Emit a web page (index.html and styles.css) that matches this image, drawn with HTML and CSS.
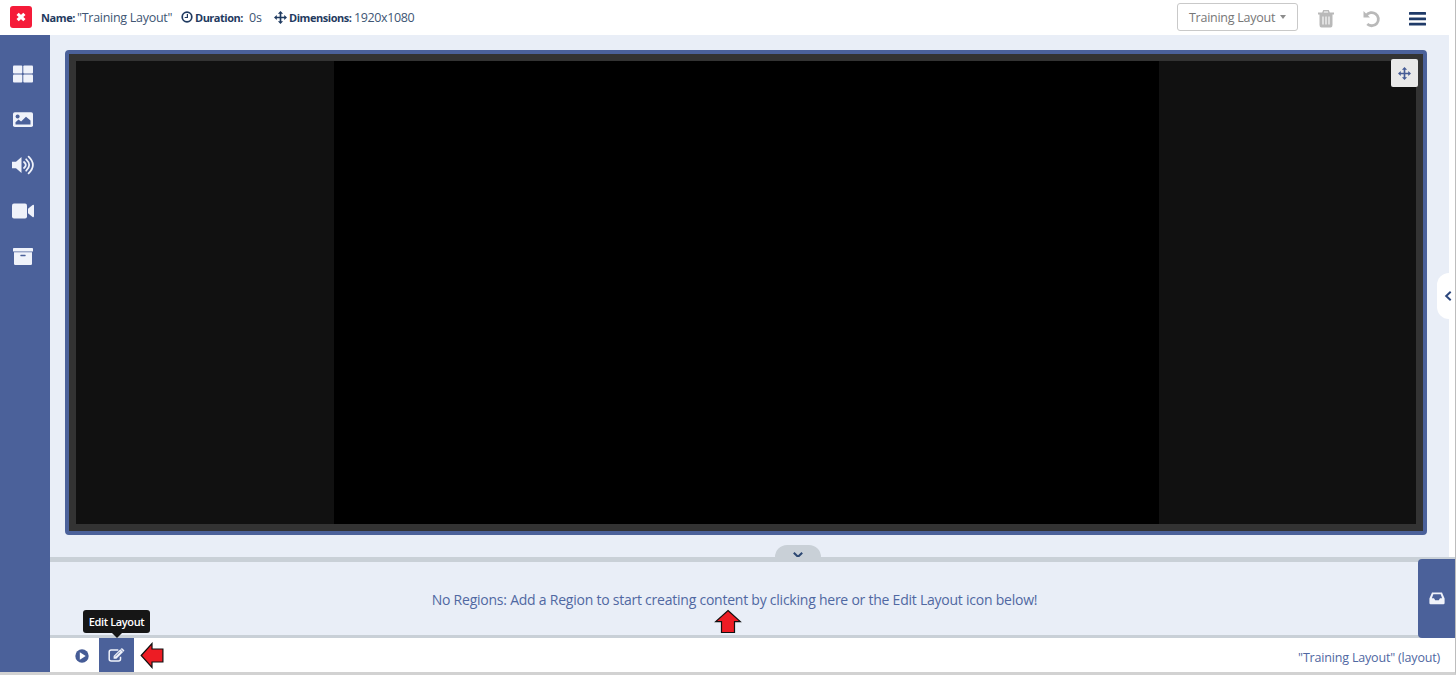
FILE: index.html
```html
<!DOCTYPE html>
<html lang="en">
<head>
<meta charset="utf-8">
<title>Layout Editor</title>
<link rel="stylesheet" href="styles.css">
</head>
<body>
<div class="editor">
  <header class="topbar">
    <button class="close" aria-label="Close"><svg width="12" height="12" viewBox="0 0 12 12"><path d="M2.6 2.8 9.4 9.2M9.4 2.8 2.6 9.2" stroke="#fff" stroke-width="3.2"/></svg></button>
    <div class="info">
      <b class="label name-label">Name:</b><span class="value name-value">"Training Layout"</span>
      <svg class="clock" width="12" height="12" viewBox="0 0 12 12"><circle cx="6" cy="6" r="4.8" fill="none" stroke="#1f3a60" stroke-width="1.7"/><path d="M6.4 3v3.5H3.7" fill="none" stroke="#1f3a60" stroke-width="1.2"/></svg>
      <b class="label duration-label">Duration:</b><span class="value duration-value">0s</span>
      <svg class="dims" width="13" height="13" viewBox="0 0 14 14" fill="#1f3a60"><path d="M7 0 9.8 3H7.9v3.1H11V4.2L14 7l-3 2.8V7.9H7.9V11h1.9L7 14l-2.8-3h1.9V7.9H3v1.9L0 7l3-2.8v1.9h3.1V3H4.2z"/></svg>
      <b class="label dims-label">Dimensions:</b><span class="value dims-value">1920x1080</span>
    </div>
    <div class="actions">
      <button class="select"><span>Training Layout</span><i class="caret"></i></button>
      <svg class="trash" width="16" height="18" viewBox="0 0 16 18"><path fill="#b9b9b9" d="M5.2 0h5.6l1 2.6H16v1.8h-1.5V15q0 2.500-2 2.500h-9q-2 0-2-2.500V4.400H0V2.600h4.200zM6.100 1.500l-.4 1.100h4.600l-.4-1.100z"/><path d="M5 6.500v8M8 6.500v8M11 6.500v8" stroke="#fff" stroke-width="1.100"/></svg>
      <svg class="undo" width="18" height="18" viewBox="0 0 18 18"><path d="M3.200 5.600A6.600 6.600 0 1 1 4.300 14" fill="none" stroke="#b9b9b9" stroke-width="2.800"/><path d="M.5 1v6.500H7z" fill="#b9b9b9"/></svg>
      <svg class="menu" width="17" height="14" viewBox="0 0 17 14" fill="#1f3a68"><rect width="17" height="2.800" rx=".5"/><rect y="5.400" width="17" height="2.800" rx=".5"/><rect y="10.800" width="17" height="2.800" rx=".5"/></svg>
    </div>
  </header>

  <nav class="sidebar">
    <svg width="22" height="20" viewBox="0 0 22 20" fill="#eff2fa"><rect x="1" y="1.500" width="9.300" height="8" rx="1"/><rect x="11.300" y="1.500" width="9.700" height="8" rx="1"/><rect x="1" y="10.500" width="9.300" height="8" rx="1"/><rect x="11.300" y="10.500" width="9.700" height="8" rx="1"/></svg>
    <svg width="22" height="20" viewBox="0 0 22 20"><rect x="1" y="2.300" width="20" height="14.700" rx="1.800" fill="#eff2fa"/><circle cx="5.600" cy="6.500" r="2" fill="#4b619a"/><path d="M3.500 14.600v-2.400l3-2.800 2.600 2L14 6.800l4.500 3.800v4z" fill="#4b619a"/></svg>
    <svg width="24" height="20" viewBox="0 0 24 20"><path d="M1 6.800h4L10.500 2v16L5 13.200H1z" fill="#eff2fa"/><path d="M13 7q3.600 3 0 6M15.200 4.300q6 5.700 0 11.400M17.600 1.700q8.600 8.300 0 16.600" fill="none" stroke="#eff2fa" stroke-width="1.800" stroke-linecap="round"/></svg>
    <svg width="24" height="20" viewBox="0 0 24 20" fill="#eff2fa"><rect x="1" y="2.500" width="15" height="15" rx="2"/><path d="M17 7.700l4.600-3.600q1.400-.8 1.400.8v10.200q0 1.600-1.400.8L17 12.300z"/></svg>
    <svg width="22" height="20" viewBox="0 0 22 20"><rect x="1" y="1" width="20" height="3.600" rx=".7" fill="#eff2fa"/><path d="M2 5.300h18v11.500q0 1.200-1.200 1.200H3.200Q2 18 2 16.800z" fill="#eff2fa"/><rect x="8.300" y="7.800" width="5.400" height="1.400" rx=".6" fill="#4b619a"/></svg>
  </nav>

  <main class="stage">
    <div class="viewer"><div class="backdrop"><div class="canvas"></div></div>
      <button class="move" aria-label="Move"><svg width="13" height="13" viewBox="0 0 14 14" fill="#465c96"><path d="M7 0 9.800 3H7.900v3.100H11V4.200L14 7l-3 2.800V7.900H7.900V11h1.900L7 14l-2.800-3h1.900V7.900H3v1.900L0 7l3-2.800v1.900h3.100V3H4.200z"/></svg></button>
    </div>
    <div class="side-handle"><svg width="8" height="12" viewBox="0 0 8 12"><path d="M6.700 1.800 2.200 6l4.500 4.200" fill="none" stroke="#2b467d" stroke-width="2"/></svg></div>
    <div class="collapse"><svg width="12" height="8" viewBox="0 0 12 8"><path d="M1.800 1.700 6 5.800l4.200-4.100" fill="none" stroke="#2d4873" stroke-width="2"/></svg></div>
  </main>

  <section class="timeline">
    <p class="message">No Regions: Add a Region to start creating content by clicking here or the Edit Layout icon below!</p>
    <svg class="arrow-up" width="28" height="25" viewBox="0 0 28 25"><path d="M14 1.500 26.300 12.600H20.500V23.500H7.500V12.600H1.700z" fill="#ed1c24" stroke="#111" stroke-width="1.200"/></svg>
    <div class="drawer"><svg width="16" height="13" viewBox="0 0 16 13"><path fill="#eff2fa" fill-rule="evenodd" d="M3 .5h10l2.600 6V11q0 1.300-1.200 1.300H1.600Q.4 12.300.4 11V6.500zM4.300 2.300 2.900 6.200H5l1.200 2h3.600l1.200-2h2.100l-1.400-3.900z"/></svg></div>
  </section>

  <footer class="bottombar">
    <button class="play" aria-label="Play"><svg width="14" height="14" viewBox="0 0 14 14"><circle cx="7" cy="7" r="6.700" fill="#465c96"/><path d="M4.800 3.300 10.700 7l-5.900 3.700z" fill="#fff"/></svg></button>
    <div class="edit"><svg width="17" height="15" viewBox="0 0 17 15"><path d="M10.300 2H3.200Q1.200 2 1.200 4v7q0 2 2 2h7.300q2 0 2-2V8.800" fill="none" stroke="#eff2fa" stroke-width="1.500"/><path d="M5.600 7.900 12.300 1.200l2.800 2.800L8.400 10.700H5.600zM13.100.5q.7-.7 1.400 0l1.500 1.500q.6.7 0 1.300l-.4.400L12.700.9z" fill="#eff2fa"/><path d="M7.200 8.500 12 3.700" stroke="#4b619a" stroke-width=".7"/></svg><span class="tooltip">Edit Layout</span></div>
    <svg class="arrow-left" width="25" height="27" viewBox="0 0 25 27"><path d="M1.200 13.500 12 1.500V7H22.900V20H12v5.500z" fill="#ed1c24" stroke="#111" stroke-width="1.200"/></svg>
    <span class="status">"Training Layout" (layout)</span>
  </footer>
</div>
</body>
</html>
```
FILE: styles.css
```css
* { box-sizing: border-box; }
body { margin: 0; background: #fff; font-family: "Open Sans", "Noto Sans", sans-serif; }
button { margin: 0; padding: 0; border: 0; font: inherit; }
svg { display: block; flex: none; }
.editor {
  width: 1456px; height: 675px; display: grid;
  grid-template: 35px 522px 81px 34px / 50px 1fr;
  border-right: 1px solid #bdbdbd; border-bottom: 3px solid #d2d2d2;
}
.topbar { grid-column: 1 / 3; display: flex; align-items: center; justify-content: space-between; padding: 0 29px 0 10px; }
.close { width: 22px; height: 22px; margin-top: -1px; flex: none; display: grid; place-items: center; background: #f51b39; border-radius: 3px; }
.info { flex: 1; display: flex; align-items: center; margin: -1px 0 0 9px; color: #1f3a60; font-size: 12.5px; line-height: 20px; white-space: nowrap; }
.label { padding-top: 1px; font-size: 11px; font-weight: 700; }
.value { padding-top: 2px; color: #405674; }
.name-label { width: 36px; letter-spacing: -.4px; }
.name-value { width: 104px; letter-spacing: -.28px; }
.clock { margin-right: 2px; }
.duration-label { width: 54px; letter-spacing: -.5px; }
.duration-value { width: 25px; letter-spacing: -.2px; }
.dims { margin-right: 2px; }
.dims-label { width: 65px; letter-spacing: -.45px; }
.dims-value { letter-spacing: -.38px; }
.actions { display: flex; align-items: center; }
.select { width: 121px; height: 28px; margin-top: -1px; display: flex; align-items: center; padding-left: 11px; gap: 5px; background: #fff; border: 1px solid #c9c9c9; border-radius: 3px; color: #777; font-size: 12.5px; letter-spacing: -.26px; white-space: nowrap; }
.select span { width: 86px; padding-top: 1px; text-align: left; }
.caret { border: 3px solid transparent; border-top: 4px solid #8c8c8c; border-bottom: 0; }
.trash { margin: 2px 0 0 20px; }
.undo { margin: 2px 0 0 29px; }
.menu { margin: 3px 0 0 28px; }
.sidebar { grid-row: 2 / 5; display: flex; flex-direction: column; align-items: center; gap: 25.7px; padding: 29px 5px 0 0; background: #4b619a; }
.stage { position: relative; margin-right: 6px; padding: 15px 22px 22px 15px; background: #e9eef7; }
.viewer { position: relative; height: 485px; padding: 7px; background: #333; border: 4px solid #4b619a; border-radius: 4px; }
.backdrop { height: 463px; display: flex; justify-content: center; background: #111; }
.canvas { width: 825px; background: #000; }
.move { position: absolute; top: 5px; right: 5px; width: 27px; height: 28px; display: grid; place-items: center; background: #e9e9e9; border-radius: 2px; }
.side-handle { position: absolute; right: -6px; top: 238px; width: 18px; height: 46px; display: flex; align-items: center; justify-content: flex-end; padding-right: 3px; background: #fff; border-radius: 12px 0 0 12px; }
.collapse { position: absolute; left: 725px; bottom: 0; width: 46px; height: 12px; display: grid; place-items: center; padding-top: 7px; background: #c9d0d7; border-radius: 15px 15px 0 0; }
.collapse svg { margin-top: -1px; }
.timeline { position: relative; display: flex; justify-content: center; background: #e9eef7; border-top: 5px solid #c9d0d7; border-bottom: 3px solid #c9d0d7; }
.message { margin: 27px 36px 0 0; color: #5068a2; font-size: 14px; line-height: 22px; letter-spacing: -.235px; white-space: nowrap; }
.arrow-up { position: absolute; left: 664px; top: 47px; }
.drawer { position: absolute; right: 0; top: -3px; width: 37px; height: 79px; display: grid; place-items: center; background: #4b619a; border-radius: 4px 0 0 4px; }
.bottombar { display: flex; align-items: center; padding: 0 15px 0 25px; background: #fff; }
.play { width: 24px; height: 34px; display: flex; align-items: center; padding-top: 1px; background: none; }
.edit { position: relative; width: 35px; height: 34px; display: grid; place-items: center; background: #4b619a; }
.tooltip { position: absolute; left: -16px; bottom: 39px; width: 67px; height: 23px; background: #161616; border-radius: 3px; color: #fff; font-size: 11px; font-weight: 600; line-height: 23px; letter-spacing: -.35px; text-align: center; white-space: nowrap; }
.tooltip::after { content: ""; position: absolute; left: 29px; top: 23px; border: 5px solid transparent; border-top-color: #161616; border-bottom: 0; }
.arrow-left { margin-left: 6px; }
.status { margin: 5px 0 0 auto; color: #5068a2; font-size: 12.5px; letter-spacing: -.18px; }
```
